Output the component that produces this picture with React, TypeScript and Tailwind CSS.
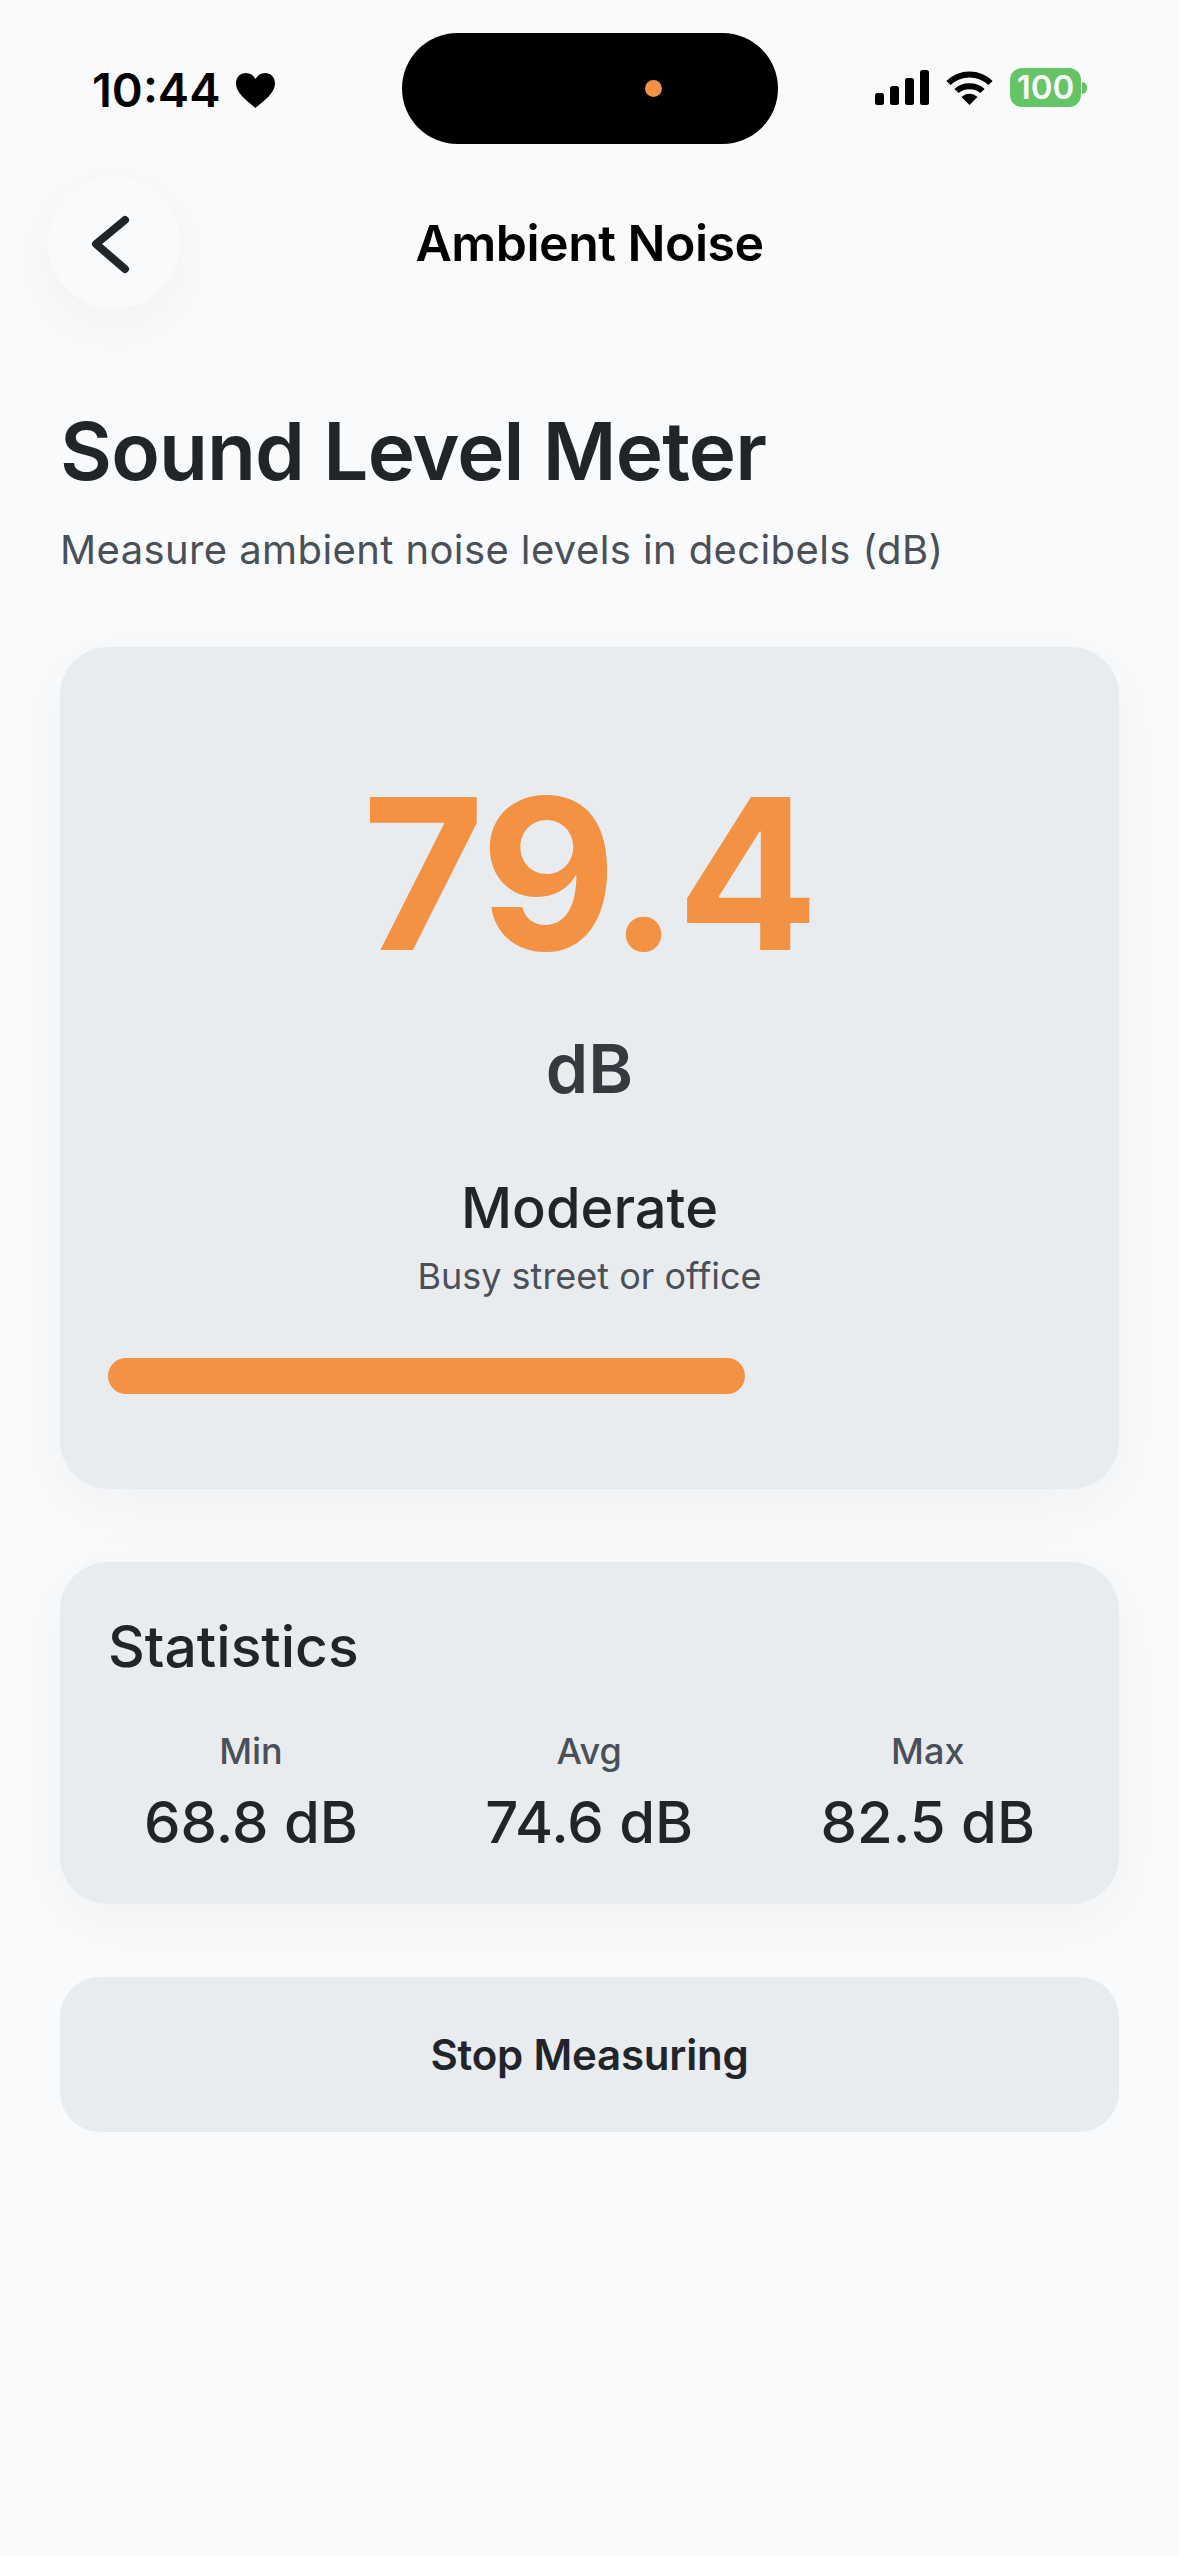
const stats = [
  { label: "Min", value: "68.8 dB" },
  { label: "Avg", value: "74.6 dB" },
  { label: "Max", value: "82.5 dB" },
];

function SignalIcon() {
  return (
    <svg width="54" height="35" viewBox="0 0 54 35" fill="#000">
      <rect x="0" y="23" width="9" height="12" rx="2.5" />
      <rect x="15" y="16" width="9" height="19" rx="2.5" />
      <rect x="30" y="8" width="9" height="27" rx="2.5" />
      <rect x="45" y="0" width="9" height="35" rx="2.5" />
    </svg>
  );
}

function WifiIcon() {
  return (
    <svg width="47" height="35" viewBox="0 0 47 35" fill="none" stroke="#000" strokeWidth="6">
      <path d="M2.5 13 C14 1.5 33 1.5 44.5 13" />
      <path d="M10.5 21 C17 14.5 30 14.5 36.5 21" />
      <path d="M15.5 27 L23.5 35 L31.5 27 C27 22.5 20 22.5 15.5 27 Z" fill="#000" stroke="none" />
    </svg>
  );
}

function HeartIcon() {
  return (
    <svg width="39" height="35" viewBox="0 0 39 35" fill="#000">
      <path d="M19.5 35 C14 30 0 21 0 10.5 C0 4 4.5 0 10 0 C14 0 17.5 2 19.5 6 C21.5 2 25 0 29 0 C34.5 0 39 4 39 10.5 C39 21 25 30 19.5 35 Z" />
    </svg>
  );
}

export default function App() {
  return (
    <div className="min-h-[2556px] w-[1179px] bg-[#f9fafc] font-['Inter','Noto_Sans',sans-serif] text-[#212529]">
      {/* Status bar */}
      <div className="flex h-[144px] items-start pl-[92px] pr-[92px] pt-[33px]">
        <div className="mt-[29px] flex w-[310px] items-center gap-[16px] text-[47px] font-semibold leading-[56px] text-black">
          <span>10:44</span>
          <HeartIcon />
        </div>
        <div className="flex h-[111px] w-[376px] items-center justify-end rounded-[56px] bg-black pr-[116px]">
          <div className="h-[17px] w-[17px] rounded-full bg-[#f29242]" />
        </div>
        <div className="mt-[35px] flex flex-1 items-center justify-end gap-[17px]">
          <SignalIcon />
          <WifiIcon />
          <div className="flex items-center gap-[1px]">
            <div className="flex h-[39px] w-[71px] items-center justify-center rounded-[12px] bg-[#65c466] text-[33px] font-semibold leading-none text-[#f9fafc]">
              100
            </div>
            <div className="h-[12px] w-[5px] rounded-r-full bg-[#65c466]" />
          </div>
        </div>
      </div>

      {/* Header */}
      <div className="mt-[33px] flex items-center px-[48px]">
        <button className="flex h-[132px] w-[132px] items-center justify-center rounded-full bg-[#f9fafc] shadow-[0_16px_64px_rgba(0,0,0,0.04)]">
          <svg width="132" height="132" viewBox="0 0 132 132" fill="none" stroke="#212529" strokeWidth="8" strokeLinecap="round" strokeLinejoin="round">
            <path d="M77 43 L48 67 L77 92" />
          </svg>
        </button>
        <div className="flex-1 text-center text-[50px] font-semibold leading-[60px] tracking-[-0.5px] text-black">Ambient Noise</div>
        <div className="w-[132px]" />
      </div>

      <div className="px-[60px]">
        <h1 className="mt-[92px] text-[80px] font-semibold leading-[100px] tracking-[-0.9px]">Sound Level Meter</h1>
        <p className="mt-[24px] text-[40px] leading-[50px] tracking-[0.4px] text-[#495057]">Measure ambient noise levels in decibels (dB)</p>

        {/* Current level */}
        <div className="mt-[72px] flex h-[842px] flex-col items-center rounded-[48px] bg-[#e9ecef] px-[48px] shadow-[0_16px_64px_rgba(0,0,0,0.04)]">
          <div className="mt-[107px] text-[210px] font-bold leading-[240px] tracking-[-2px] text-[#f29242]">79.4</div>
          <div className="mt-[34px] text-[68px] font-semibold leading-[80px] text-[#343a40]">dB</div>
          <div className="mt-[65px] text-[56px] font-medium leading-[70px]">Moderate</div>
          <div className="mt-[11px] text-[36px] leading-[44px] text-[#495057]">Busy street or office</div>
          <div className="mt-[60px] h-[36px] w-full">
            <div className="h-full rounded-[18px] bg-[#f29242]" style={{ width: `${(637 / 963) * 100}%` }} />
          </div>
        </div>

        {/* Statistics */}
        <div className="mt-[73px] h-[342px] rounded-[48px] bg-[#e9ecef] px-[48px] pt-[51px] shadow-[0_16px_64px_rgba(0,0,0,0.04)]">
          <h2 className="text-[57px] font-medium leading-[68px]">Statistics</h2>
          <div className="mt-[48px] flex justify-between px-[36px]">
            {stats.map((stat) => (
              <div key={stat.label} className="flex flex-col items-center">
                <span className="text-[36px] font-medium leading-[44px] text-[#495057]">{stat.label}</span>
                <span className="mt-[15px] text-[58px] font-medium leading-[68px]">{stat.value}</span>
              </div>
            ))}
          </div>
        </div>

        <button className="mt-[73px] flex h-[155px] w-full items-center justify-center rounded-[40px] bg-[#e9ecef] text-[42px] font-semibold leading-[50px] tracking-[-0.2px]">
          Stop Measuring
        </button>
      </div>
    </div>
  );
}
